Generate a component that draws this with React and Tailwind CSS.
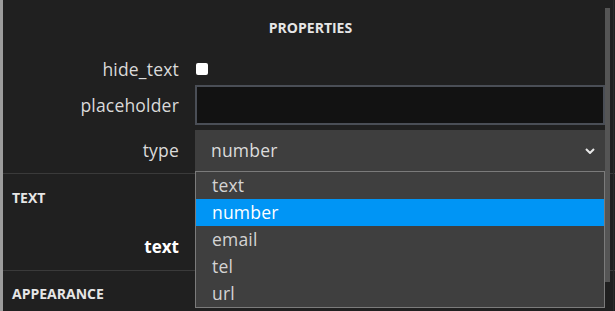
import { useState } from "react";

const options = ["text", "number", "email", "tel", "url"];

function Label({ children }) {
  return (
    <div className="w-[176px] shrink-0 text-right text-[17.5px] tracking-[0.2px] text-[#dadada]">
      {children}
    </div>
  );
}

export default function App() {
  const [value] = useState("number");

  return (
    <div
      className="flex h-[311px] w-[615px] overflow-hidden bg-[#1c1c1c]"
      style={{ fontFamily: '"Open Sans", "Liberation Sans", sans-serif' }}
    >
      <div className="w-[3px] shrink-0 bg-[#9c9c9c]" />

      <div className="relative flex-1 bg-[#202020]">
        <div className="flex h-[54px] items-center justify-center pl-[3px] text-[14px] font-bold text-[#e6e6e6]">
          PROPERTIES
        </div>

        <div className="flex h-[30px] items-center gap-[17px]">
          <Label>hide_text</Label>
          <div className="h-[12px] w-[12px] rounded-[2px] bg-white" />
        </div>

        <div className="mt-px flex h-[40px] items-center gap-[16px]">
          <Label>placeholder</Label>
          <div className="mr-[10px] h-full flex-1 border-2 border-[#4a4e56] bg-[#121212]" />
        </div>

        <div className="mt-[5px] flex h-[41px] items-center gap-[16px]">
          <Label>type</Label>
          <div className="relative mr-[10px] flex h-full flex-1 items-center justify-between bg-[#3e3e3e] pl-[16px] pr-[10px] text-[17.5px] tracking-[0.2px] text-[#dcdcdc]">
            <span>{value}</span>
            <svg width="10" height="6" viewBox="0 0 10 6" fill="none">
              <path d="M1 1l4 4 4-4" stroke="#e8e8e8" strokeWidth="2" />
            </svg>

            <ul className="absolute left-0 right-0 top-[41px] z-10 border border-[#7b7b7b] bg-[#3f3f3f]">
              {options.map((o) => (
                <li
                  key={o}
                  className={`flex h-[27px] items-center pl-[16px] ${
                    o === value ? "bg-[#0095f5] text-white" : "text-[#d4d4d4]"
                  }`}
                >
                  {o}
                </li>
              ))}
            </ul>
          </div>
        </div>

        <div className="mt-[2px] border-t border-[#3a3a3a]">
          <div className="flex h-[47px] items-center pl-[9px] text-[14px] font-bold text-[#e6e6e6]">
            TEXT
          </div>
          <div className="flex h-[49px] items-center">
            <div className="w-[176px] pt-[2px] text-right text-[17px] font-bold text-white">text</div>
          </div>
        </div>

        <div className="border-t border-[#3a3a3a]">
          <div className="flex h-[44px] items-center pl-[9px] text-[14px] font-bold text-[#e6e6e6]">
            APPEARANCE
          </div>
        </div>

        <div className="absolute right-[5px] top-[8px] h-[274px] w-[5px] bg-[#555555]" />
        <div className="absolute right-[1px] top-0 h-full w-px bg-[#2c2c2c]" />
      </div>
    </div>
  );
}
